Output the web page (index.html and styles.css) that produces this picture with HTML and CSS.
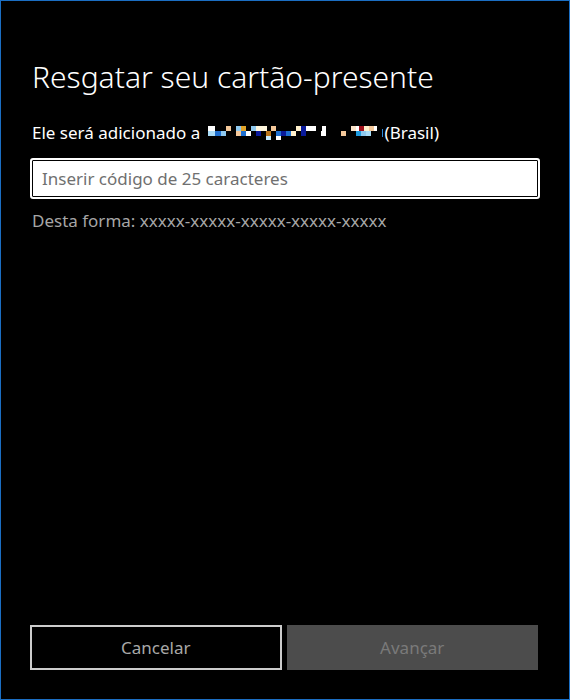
FILE: index.html
```html
<!DOCTYPE html>
<html lang="pt-BR">
<head>
<meta charset="utf-8">
<title>Resgatar seu cartão-presente</title>
<link rel="stylesheet" href="styles.css">
</head>
<body>
<div class="window">
  <div class="content">
    <h1 class="title">Resgatar seu cartão-presente</h1>
    <p class="account">Ele será adicionado a <svg class="blur" width="178" height="16" viewBox="0 0 178 16" aria-hidden="true">
      <rect x="1" y="1" width="7" height="5" fill="#ffffff"/>
      <rect x="19" y="1" width="5" height="5" fill="#f4c89a"/>
      <rect x="29" y="1" width="5" height="5" fill="#8fc9ef"/>
      <rect x="34" y="1" width="5" height="5" fill="#e2a52a"/>
      <rect x="44" y="1" width="5" height="5" fill="#8fc9ef"/>
      <rect x="49" y="1" width="11" height="5" fill="#fff6dd"/>
      <rect x="64" y="1" width="5" height="5" fill="#f4c89a"/>
      <rect x="89" y="1" width="5" height="5" fill="#fff1cc"/>
      <rect x="94" y="1" width="5" height="5" fill="#0a1a9a"/>
      <rect x="99" y="1" width="10" height="5" fill="#ffffff"/>
      <rect x="115" y="1" width="4" height="5" fill="#ffffff"/>
      <rect x="144" y="1" width="5" height="5" fill="#fbe3c8"/>
      <rect x="149" y="1" width="3" height="5" fill="#ffffff"/>
      <rect x="152" y="1" width="5" height="5" fill="#a0101a"/>
      <rect x="157" y="1" width="5" height="5" fill="#fff1cc"/>
      <rect x="162" y="1" width="5" height="5" fill="#f4c89a"/>
      <rect x="167" y="1" width="3" height="5" fill="#ffffff"/>
      <rect x="1" y="6" width="7" height="5" fill="#a9dcf7"/>
      <rect x="8" y="6" width="6" height="5" fill="#1e6fd0"/>
      <rect x="14" y="6" width="5" height="5" fill="#8fc9ef"/>
      <rect x="29" y="6" width="5" height="5" fill="#f4c89a"/>
      <rect x="34" y="6" width="5" height="5" fill="#1e6fd0"/>
      <rect x="39" y="6" width="5" height="5" fill="#ffffff"/>
      <rect x="49" y="6" width="5" height="5" fill="#0a1a9a"/>
      <rect x="59" y="6" width="5" height="5" fill="#b8731a"/>
      <rect x="69" y="6" width="5" height="5" fill="#1e6fd0"/>
      <rect x="74" y="6" width="5" height="5" fill="#0a1a9a"/>
      <rect x="79" y="6" width="5" height="5" fill="#1e6fd0"/>
      <rect x="84" y="6" width="5" height="5" fill="#fff1cc"/>
      <rect x="94" y="6" width="5" height="5" fill="#0a1a9a"/>
      <rect x="114" y="6" width="5" height="5" fill="#ffffff"/>
      <rect x="134" y="6" width="5" height="5" fill="#f4c89a"/>
      <rect x="149" y="6" width="5" height="5" fill="#1e9be0"/>
      <rect x="154" y="6" width="5" height="5" fill="#8fc9ef"/>
      <rect x="159" y="6" width="5" height="5" fill="#a9dcf7"/>
      <rect x="59" y="11" width="5" height="4" fill="#c6ecff"/>
      <rect x="69" y="11" width="5" height="4" fill="#ffffff"/>
      <rect x="175" y="4" width="1" height="8" fill="#2a8ad8"/>
    </svg>(Brasil)</p>
    <div class="field">
      <input class="code-input" type="text" placeholder="Inserir código de 25 caracteres">
    </div>
    <p class="hint">Desta forma: xxxxx-xxxxx-xxxxx-xxxxx-xxxxx</p>
  </div>
  <div class="actions">
    <button class="btn btn-cancel" type="button">Cancelar</button>
    <button class="btn btn-next" type="button" disabled>Avançar</button>
  </div>
</div>
</body>
</html>
```
FILE: styles.css
```css
* { box-sizing: border-box; }
html, body { margin: 0; padding: 0; background: #000; }
body {
  font-family: "Noto Sans", "Open Sans", "Liberation Sans", sans-serif;
  color: #fff;
}
.window {
  width: 570px;
  height: 700px;
  border: 1px solid #1b6ec2;
  background: #000;
  display: flex;
  flex-direction: column;
}
.content {
  flex: 1;
  padding: 0 29px 0 29px;
}
.title {
  margin: 56px 0 0 2px;
  font-size: 30px;
  font-weight: 300;
  line-height: 40px;
  color: #fff;
}
.account {
  margin: 24px 0 0 2px;
  font-size: 17px;
  line-height: 24px;
  color: #fff;
  white-space: nowrap;
}
.blur {
  vertical-align: -2px;
  margin-left: 2px;
}
.field {
  margin-top: 13px;
}
.code-input {
  display: block;
  width: 510px;
  height: 41px;
  margin: 0;
  padding: 0 10px;
  border: 2px solid #fff;
  border-radius: 3px;
  box-shadow: inset 0 0 0 1px #000;
  background: #fff;
  font-family: inherit;
  font-size: 17px;
  color: #000;
  outline: none;
}
.code-input::placeholder { color: #707070; }
.hint {
  margin: 10px 0 0 2px;
  font-size: 17px;
  line-height: 24px;
  color: #a6a6a6;
}
.actions {
  display: flex;
  gap: 5px;
  padding: 0 31px 29px 29px;
}
.btn {
  flex: 1;
  height: 45px;
  font-family: inherit;
  font-size: 17px;
  border-radius: 0;
  margin: 0;
}
.btn-cancel {
  background: #000;
  color: #a8a8a8;
  border: 2px solid #cccccc;
}
.btn-next {
  background: #4c4c4c;
  color: #7a7a7a;
  border: 2px solid #4c4c4c;
}
```
